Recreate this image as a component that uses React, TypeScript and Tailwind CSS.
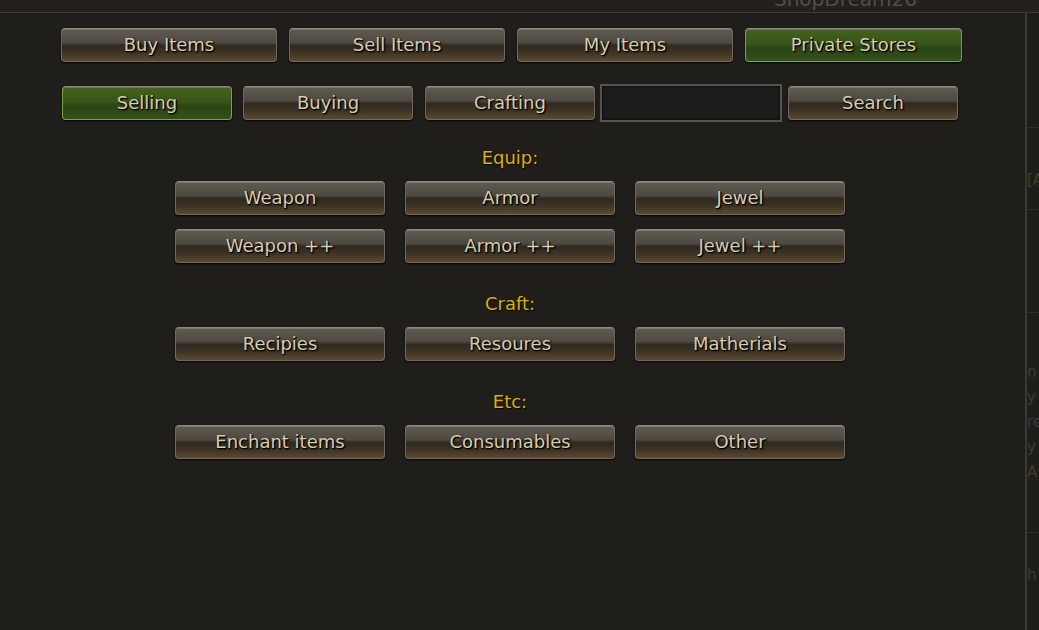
import React from "react";

const btnBase =
  "flex items-center justify-center h-[34px] rounded-[4px] border border-[#6f695f] border-t-[#8f897e] text-[#d6ccae] text-[18px] leading-none [text-shadow:1px_1px_1px_#000,1px_1px_2px_#000] shadow-[0_1px_2px_rgba(0,0,0,0.9),inset_0_1px_0_rgba(255,255,255,0.18)]";
const brown =
  "bg-[linear-gradient(to_bottom,#5f5b53_0%,#4e4a42_42%,#2f2920_52%,#3f3424_75%,#5a4a30_100%)]";
const green =
  "bg-[linear-gradient(to_bottom,#43631d_0%,#38551a_45%,#2b4512_60%,#34501a_100%)] border-[#76a446] border-t-[#8cbc58]";

function Btn({
  label,
  w,
  active,
  className = "",
}: {
  label: string;
  w: string;
  active?: boolean;
  className?: string;
}) {
  return (
    <div className={`${btnBase} ${active ? green : brown} ${w} ${className}`}>
      <span className="pb-[1px]">{label}</span>
    </div>
  );
}

function Section({ title, items, mt }: { title: string; items: string[][]; mt: string }) {
  return (
    <div className={`flex flex-col w-[670px] ml-[175px] ${mt}`}>
      <div className="h-[20px] text-center text-[18px] leading-[20px] text-[#d8b200] [text-shadow:1px_1px_1px_#000]">
        {title}
      </div>
      <div className="mt-[13px] flex flex-col gap-[14px]">
        {items.map((row, i) => (
          <div key={i} className="flex gap-[20px]">
            {row.map((t) => (
              <Btn key={t} label={t} w="w-[210px]" />
            ))}
          </div>
        ))}
      </div>
    </div>
  );
}

export default function App() {
  return (
    <div
      className="w-[1039px] h-[630px] overflow-hidden bg-[#201e1b] flex flex-col"
      style={{ fontFamily: '"DejaVu Sans", "Liberation Sans", sans-serif' }}
    >
      {/* top strip */}
      <div className="h-[13px] shrink-0 bg-[#23211e] border-b border-[#3e3b36] relative overflow-hidden">
        <div className="absolute left-[774px] top-[-11px] text-[20px] leading-[20px] text-[#524e48]">
          ShopDream26
        </div>
      </div>
      <div className="flex flex-1 min-h-0">
        {/* main panel */}
        <div className="w-[1027px] shrink-0 border-r-2 border-[#3a3834] flex flex-col">
          <div className="flex gap-[12px] pl-[61px] pt-[15px]">
            <Btn label="Buy Items" w="w-[216px]" />
            <Btn label="Sell Items" w="w-[216px]" />
            <Btn label="My Items" w="w-[216px]" />
            <Btn label="Private Stores" w="w-[217px]" active />
          </div>
          <div className="flex items-center pl-[62px] mt-[22px] h-[38px]">
            <Btn label="Selling" w="w-[170px]" active />
            <Btn label="Buying" w="w-[170px]" className="ml-[11px]" />
            <Btn label="Crafting" w="w-[170px]" className="ml-[12px]" />
            <div className="ml-[5px] w-[182px] h-[38px] border-2 border-[#56534e] bg-[#1c1c1c] shadow-[inset_0_0_3px_rgba(0,0,0,0.9)]" />
            <Btn label="Search" w="w-[170px]" className="ml-[6px]" />
          </div>
          <Section
            title="Equip:"
            mt="mt-[26px]"
            items={[
              ["Weapon", "Armor", "Jewel"],
              ["Weapon ++", "Armor ++", "Jewel ++"],
            ]}
          />
          <Section title="Craft:" mt="mt-[31px]" items={[["Recipies", "Resoures", "Matherials"]]} />
          <Section title="Etc:" mt="mt-[31px]" items={[["Enchant items", "Consumables", "Other"]]} />
        </div>
        {/* right edge strip */}
        <div className="flex-1 flex flex-col bg-[#1f1d1a] text-[15px] leading-none overflow-hidden">
          <div className="h-[115px] border-b border-[#302e2a]" />
          <div className="h-[82px] border-b border-[#302e2a] pt-[45px] text-[#44411c]">[A</div>
          <div className="h-[103px] border-b border-[#302e2a]" />
          <div className="h-[220px] border-b border-[#302e2a] pt-[52px] text-[#3e3d22] flex flex-col gap-[10px]">
            <span>n</span>
            <span className="text-[#3c3a34]">y</span>
            <span className="text-[#3c3a34]">re</span>
            <span>y</span>
            <span>A</span>
          </div>
          <div className="pt-[35px] text-[#3c3a34]">h</div>
        </div>
      </div>
    </div>
  );
}
